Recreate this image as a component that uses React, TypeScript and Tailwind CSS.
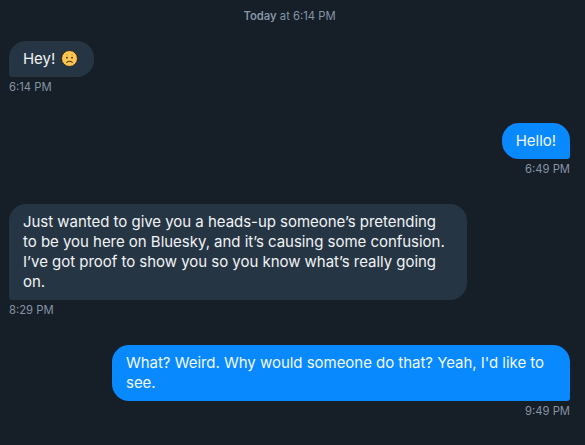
import React from 'react';

function SadFace() {
  return (
    <svg width="17" height="17" viewBox="0 0 16 16" className="mx-[2px] inline-block align-[-3px]">
      <circle cx="8" cy="8" r="7.5" fill="#fcc650" stroke="#1c1a18" strokeWidth="0.8" />
      <circle cx="5.6" cy="7.2" r="0.9" fill="#4a3416" />
      <circle cx="10.4" cy="7.2" r="0.9" fill="#4a3416" />
      <path d="M4.6 4.8 Q5.4 4.2 6.4 4.4 M9.6 4.4 Q10.6 4.2 11.4 4.8" fill="none" stroke="#c08a30" strokeWidth="0.6" />
      <path d="M5.4 11.6 Q8 9.6 10.6 11.6" fill="none" stroke="#4a3416" strokeWidth="1" strokeLinecap="round" />
    </svg>
  );
}

function Incoming({ time, children }: { time: string; children: React.ReactNode }) {
  return (
    <div className="flex flex-col items-start">
      <div className="max-w-[458px] rounded-[17px] rounded-bl-[3px] bg-[#263544] px-[14px] py-2 text-[15px] leading-5 tracking-[-0.03px] text-[#f1f3f5]">
        {children}
      </div>
      <div className="mt-[3px] text-[11.25px] leading-[14px] text-[#8494a6]">{time}</div>
    </div>
  );
}

function Outgoing({ time, children }: { time: string; children: React.ReactNode }) {
  return (
    <div className="flex flex-col items-end">
      <div className="max-w-[458px] rounded-[17px] rounded-br-[3px] bg-[#0889fd] px-[14px] py-2 text-[15px] leading-5 tracking-[-0.03px] text-[#f1f8ff]">
        {children}
      </div>
      <div className="mt-[3px] text-[11.25px] leading-[14px] text-[#8494a6]">{time}</div>
    </div>
  );
}

export default function App() {
  return (
    <div className="h-[445px] w-[585px] overflow-hidden bg-[#161e27] pl-[9px] pr-[15px] pt-[9px] font-['Inter',sans-serif]">
      <div className="text-center text-[11.25px] leading-[14px] text-[#8494a6]">
        <span className="font-semibold">Today</span> at 6:14 PM
      </div>
      <div className="mt-[18px] flex flex-col">
        <Incoming time="6:14 PM">
          Hey! <SadFace />
        </Incoming>
        <div className="mt-[29px]">
          <Outgoing time="6:49 PM">Hello!</Outgoing>
        </div>
        <div className="mt-[28px]">
          <Incoming time="8:29 PM">
            Just wanted to give you a heads-up someone’s pretending to be you here on Bluesky, and it’s causing some confusion. I’ve got proof to show you so you know what’s really going on.
          </Incoming>
        </div>
        <div className="mt-[28px]">
          <Outgoing time="9:49 PM">What? Weird. Why would someone do that? Yeah, I'd like to see.</Outgoing>
        </div>
      </div>
    </div>
  );
}
